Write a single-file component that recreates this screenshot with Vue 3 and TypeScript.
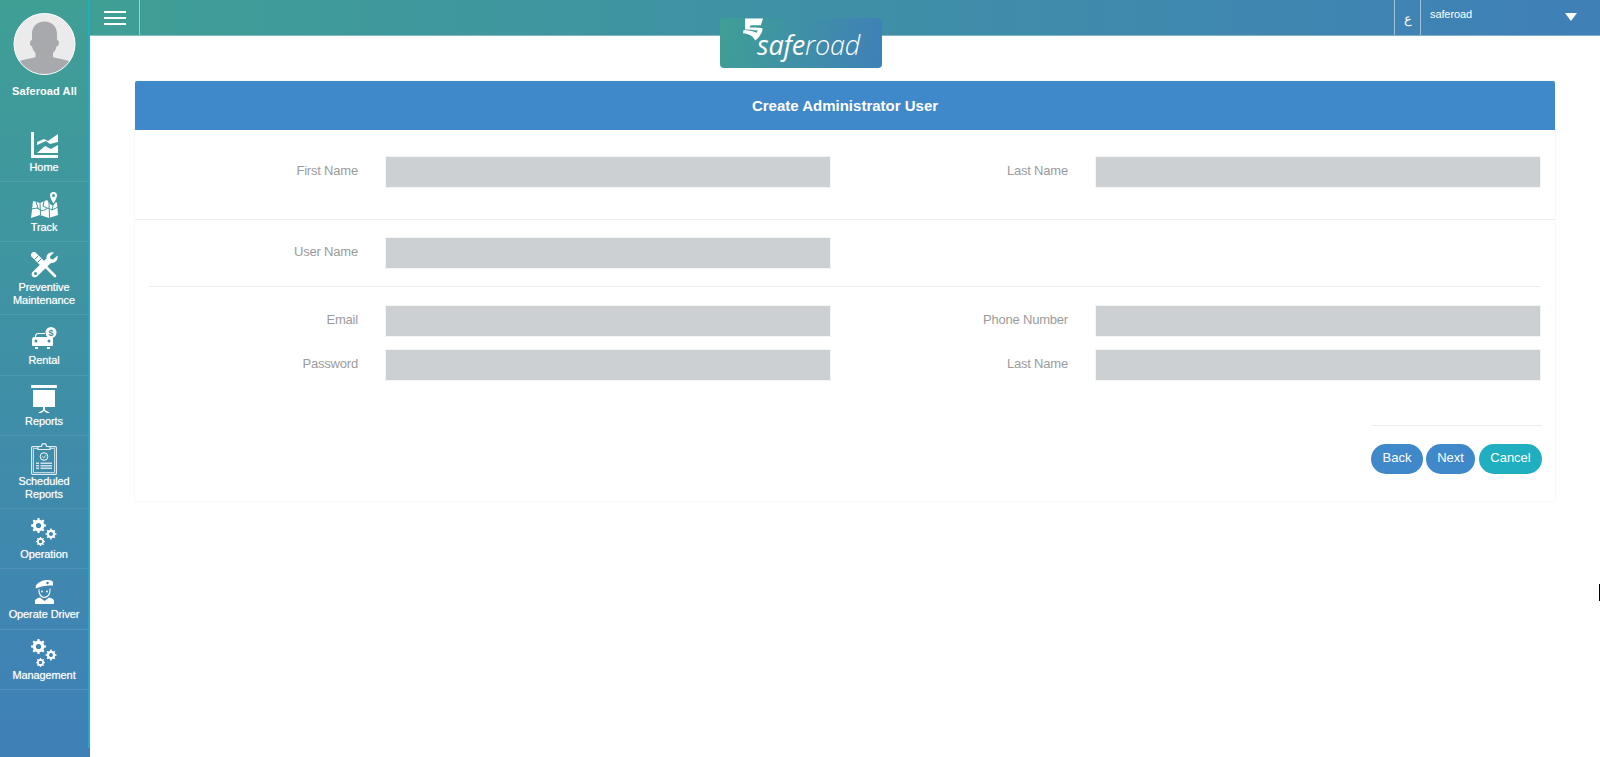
<template>
  <div class="page">
    <aside class="sidebar">
      <div class="sidebar-inner">
        <div class="profile">
          <div class="avatar">
            <svg viewBox="0 0 60 60" width="60" height="60">
              <path d="M30 7.500c7.500 0 12.500 5 12.500 12.500v6c1 0 2 1 2 3s-1 3-2.500 3.500c-.5 3-2 5-3.500 6.500v4c3 1.500 12 2 21 6v11H0V49c9-4 18-4.500 21-6v-4c-1.500-1.500-3-3.500-3.500-6.500C16 32 15.500 31 15.500 29s1-3 2-3v-6c0-7.500 5-12.500 12.500-12.500z" fill="#a7a9ac" />
            </svg>
          </div>
          <div class="profile-name">Saferoad All</div>
        </div>
        <nav>
          <a v-for="item in navItems" :key="item.label" class="nav-item" :class="{ roomy: item.roomy }">
            <span class="nav-icon">
              <svg v-if="item.icon === 'home'" width="27" height="26" viewBox="0 0 27 26" fill="#fff">
                <path d="M0 0h3v23h24v3H0z" />
                <path d="M6 10l7-3 4 2 10-7v8l-8 2-4-3-9 4z" />
                <path d="M6 21l8-7 6 3 7-4v8z" />
              </svg>
              <svg v-else-if="item.icon === 'track'" width="27" height="26" viewBox="0 0 27 26" fill="#fff">
                <path d="M22.500 0a3.500 3.500 0 0 1 3.500 3.500c0 2.500-3.500 8-3.500 8s-3.500-5.500-3.500-8A3.500 3.500 0 0 1 22.500 0zm0 2a1.500 1.500 0 1 0 0 3 1.500 1.500 0 0 0 0-3z" fill-rule="evenodd" />
                <path d="M2 9l7 2 7-3 3 4 3 2 3-4 1 1 1 12-9 3-9-3-9 3 1-8z" />
                <path d="M9 11l.5 12M18 8v3l.5 15M0 17l6-1 5 3 6-3 4 2 6-3M5 10l2 6 3 3M13 9l-1 5 4 2M22 14l-1 4" fill="none" stroke="#3f9a9b" stroke-width="1" />
              </svg>
              <svg v-else-if="item.icon === 'tools'" width="27" height="26" viewBox="0 0 27 26" fill="#fff">
                <path d="M3 3l8 8" stroke="#fff" stroke-width="6" stroke-linecap="round" />
                <path d="M11 11l13 13" stroke="#fff" stroke-width="2.600" stroke-linecap="round" />
                <path d="M3.500 7.500l4-4M6.500 10.500l4-4" stroke="#3f93a3" stroke-width="1" />
                <path d="M26.500 3.500c1 4.500-2.500 8-6.500 7.500L7 23.500c-1.500 2-4 2.500-5.500 1s-1-4 1-5.500L15.500 6.500C15 2.500 18.500-.5 23 .5l-4 4 .5 2.500 2.500.5z" />
                <circle cx="4.500" cy="21.500" r="1.500" fill="#3f93a3" />
              </svg>
              <svg v-else-if="item.icon === 'rental'" width="25" height="22" viewBox="0 0 25 22" fill="#fff">
                <circle cx="19" cy="5.500" r="5.500" />
                <text x="19" y="8.800" font-size="9" font-weight="700" text-anchor="middle" fill="#3f8fa5" font-family="Liberation Sans, sans-serif">$</text>
                <path d="M3 10c0-2.500 1-4 3-4h7v1H6C5 7 4 8 4 10z" />
                <path d="M0 12c0-1 1-2 2-2h17c1 0 2 1 2 2v6c0 1-1 1-2 1H2c-1 0-2 0-2-1zM3 20h3v2H3zM15 20h3v2h-3z" />
                <circle cx="4" cy="14" r="1.500" fill="#3f8fa5" />
                <circle cx="17" cy="14" r="1.500" fill="#3f8fa5" />
              </svg>
              <svg v-else-if="item.icon === 'board'" width="26" height="28" viewBox="0 0 26 28" fill="#fff">
                <path d="M0 0h26v3H0zM2 5h22v17H2zM12 22h2v3l5 3h-3l-3-2-3 2H7l5-3z" />
              </svg>
              <svg v-else-if="item.icon === 'clipboard'" width="26" height="32" viewBox="0 0 26 32">
                <rect x=".6" y="3.600" width="24.800" height="27.800" rx="1" fill="none" stroke="#dfeaf2" stroke-width="1.200" />
                <rect x="2.600" y="5.600" width="20.800" height="23.800" fill="none" stroke="#dfeaf2" stroke-width=".8" />
                <path d="M7 3.500h3.500C10.500 1.500 11.500.6 13 .6s2.500.9 2.500 2.900H19v3H7z" fill="#3f8aa8" stroke="#e8f0f5" stroke-width="1.100" />
                <circle cx="13" cy="13.500" r="3.800" fill="none" stroke="#fff" stroke-width="1" />
                <path d="M11.200 13.500l1.400 1.400 2.400-2.700" fill="none" stroke="#fff" stroke-width=".9" />
                <path d="M5 19.500h3v1.500H5zM5 22h3v1.500H5zM5 24.500h3V26H5zM9.500 19.500H21v1.500H9.500zM9.500 22H21v1.500H9.500zM9.500 24.500H21V26H9.500z" fill="#cfe0ea" />
              </svg>
              <svg v-else-if="item.icon === 'gears'" width="26" height="28" viewBox="0 0 26 28" fill="#fff" fill-rule="evenodd">
                <path :d="gearPath(7.500, 7.500, 7.500, 2.600, 8)" />
                <path :d="gearPath(20, 16, 5.500, 2, 8)" />
                <path :d="gearPath(9.500, 23.500, 4.500, 1.800, 8)" />
              </svg>
              <svg v-else width="19" height="24" viewBox="0 0 19 24" fill="#fff">
                <path d="M1 5.500C3 2 8 0 13 0c3 0 5 1 5 2.500v3C12 5 6 6 1 8.500c-.5-1-.5-2 0-3z" />
                <circle cx="12.500" cy="3" r="1.300" fill="#3f85b0" />
                <path d="M3.500 9.500c-.5 5 2.500 8.500 6 8.500s6.500-3.500 6-9.500l-1 .1c.5 5-2 8.200-5 8.200S4.200 13.500 4.500 9z" />
                <circle cx="7" cy="11.500" r=".9" />
                <circle cx="12" cy="11.500" r=".9" />
                <path d="M0 24v-3c0-1.500 1.500-2.500 5-3.500l4.500 3.500 4.500-3.500c3.500 1 5 2 5 3.500v3z" />
              </svg>
            </span>
            <span class="nav-label">
              <span v-for="line in item.label.split('|')" :key="line">{{ line }}</span>
            </span>
          </a>
        </nav>
      </div>
      <div class="sidebar-strip"></div>
    </aside>

    <div class="main">
      <header class="topbar">
        <button class="menu-btn" aria-label="Menu"><i></i><i></i><i></i></button>
        <div class="topbar-right">
          <span class="lang">ع</span>
          <div class="account">
            <span>saferoad</span>
            <b class="caret"></b>
          </div>
        </div>
      </header>

      <div class="logo">
        <svg class="logo-mark" width="20" height="23" viewBox="0 0 19 21" fill="#fff">
          <path d="M2 0h17l-2 6.500H7.500L6 8.500c5 0 11 0 12.500 1 .5 2.500-2.500 8.500-7 11.500-1.500-4-5.500-6.500-11.500-7l.5-3c4.500 0 8.500 1 12.500 2.500l1-2C10 11 5 10.500 2 10.500z" />
        </svg>
        <span class="logo-text">safe<em>road</em></span>
      </div>

      <section class="card">
        <h1 class="card-title">Create Administrator User</h1>

        <div class="form-row first">
          <div v-for="f in ['First Name', 'Last Name']" :key="f" class="field">
            <label>{{ f }}</label>
            <input type="text" />
          </div>
        </div>

        <div class="form-row second">
          <div class="field">
            <label>User Name</label>
            <input type="text" />
          </div>
        </div>

        <div class="form-rows third">
          <div class="form-row">
            <div class="field"><label>Email</label><input type="text" /></div>
            <div class="field"><label>Phone Number</label><input type="text" /></div>
          </div>
          <div class="form-row">
            <div class="field"><label>Password</label><input type="password" /></div>
            <div class="field"><label>Last Name</label><input type="password" /></div>
          </div>
        </div>

        <div class="actions">
          <button class="btn">Back</button>
          <button class="btn next">Next</button>
          <button class="btn cancel">Cancel</button>
        </div>
      </section>
      <span class="text-cursor"></span>
    </div>
  </div>
</template>

<script setup lang="ts">
interface NavItem {
  label: string;
  icon: string;
  roomy?: boolean;
}

// a | in the label is a line break
const navItems: NavItem[] = [
  { label: "Home", icon: "home" },
  { label: "Track", icon: "track" },
  { label: "Preventive|Maintenance", icon: "tools" },
  { label: "Rental", icon: "rental", roomy: true },
  { label: "Reports", icon: "board" },
  { label: "Scheduled|Reports", icon: "clipboard" },
  { label: "Operation", icon: "gears" },
  { label: "Operate Driver", icon: "driver", roomy: true },
  { label: "Management", icon: "gears" },
];

function gearPath(cx: number, cy: number, r: number, hole: number, teeth: number): string {
  const inner = r * 0.78;
  const pts: string[] = [];
  const step = (Math.PI * 2) / teeth;
  for (let i = 0; i < teeth; i++) {
    const a = i * step;
    const w = step * 0.2;
    const corners: [number, number][] = [
      [inner, a - w * 1.3],
      [r, a - w * 0.8],
      [r, a + w * 0.8],
      [inner, a + w * 1.3],
    ];
    for (const [rad, ang] of corners) {
      pts.push(`${(cx + rad * Math.cos(ang)).toFixed(2)} ${(cy + rad * Math.sin(ang)).toFixed(2)}`);
    }
  }
  const circle = `M${cx - hole} ${cy}a${hole} ${hole} 0 1 0 ${hole * 2} 0a${hole} ${hole} 0 1 0 ${-hole * 2} 0z`;
  return `M${pts.join("L")}z${circle}`;
}
</script>

<style>
html,
body {
  margin: 0;
  padding: 0;
  background: #fff;
}
</style>

<style scoped>
.page {
  display: flex;
  height: 757px;
  overflow: hidden;
  font-family: "Liberation Sans", Arial, sans-serif;
}

.sidebar {
  display: flex;
  flex: 0 0 90px;
  background: linear-gradient(180deg, #3f9f95 0%, #3f80b8 100%);
}
.sidebar-inner {
  width: 88px;
}
.sidebar-strip {
  width: 2px;
  height: 748px;
  background: #20afc0;
}
.profile {
  height: 122px;
  padding-top: 13px;
  box-sizing: border-box;
  text-align: center;
}
.avatar {
  width: 60px;
  height: 60px;
  margin: 0 auto;
  border: 1.500px solid #fff;
  border-radius: 50%;
  background: #ebebeb;
  overflow: hidden;
  transform: translateX(.5px);
}
.avatar svg {
  display: block;
}
.profile-name {
  margin-top: 10px;
  padding-left: 1px;
  color: #fff;
  font-size: 11px;
  font-weight: 700;
  line-height: 13px;
  letter-spacing: .1px;
}
.nav-item {
  display: block;
  padding: 7px 0;
  border-bottom: 1px solid rgba(255, 255, 255, 0.09);
  color: #fff;
  text-align: center;
}
.nav-item.roomy {
  padding-bottom: 8px;
}
.nav-icon {
  display: flex;
  height: 32px;
  align-items: center;
  justify-content: center;
}
.nav-label {
  display: block;
  font-size: 11px;
  line-height: 13px;
  letter-spacing: -.1px;
  text-shadow: 0 0 1px rgba(255, 255, 255, 0.6);
}
.nav-label span {
  display: block;
}

.main {
  position: relative;
  flex: 1;
  min-width: 0;
}
.topbar {
  display: flex;
  justify-content: space-between;
  height: 35px;
  border-bottom: 1px solid rgba(255, 255, 255, 0.35);
  background: linear-gradient(90deg, #3f9f95 0%, #3f80b8 100%);
  box-sizing: content-box;
}
.menu-btn {
  display: flex;
  flex-direction: column;
  justify-content: center;
  gap: 4px;
  width: 50px;
  height: 35px;
  padding: 0 13px 0 14px;
  border: 0;
  border-right: 1px solid rgba(255, 255, 255, 0.5);
  background: none;
}
.menu-btn i {
  display: block;
  height: 2px;
  background: #fff;
}
.topbar-right {
  display: flex;
}
.lang {
  width: 25px;
  border-left: 1px solid rgba(255, 255, 255, 0.5);
  border-right: 1px solid rgba(255, 255, 255, 0.5);
  color: #fff;
  font-size: 13px;
  line-height: 38px;
  text-align: center;
}
.account {
  display: flex;
  justify-content: space-between;
  width: 179px;
  padding: 8px 23px 0 9px;
  box-sizing: border-box;
  color: #fff;
  font-size: 11px;
  line-height: 13px;
  letter-spacing: -.1px;
}
.caret {
  width: 0;
  height: 0;
  margin-top: 5px;
  border-left: 6px solid transparent;
  border-right: 6px solid transparent;
  border-top: 8px solid #fff;
}

.logo {
  position: absolute;
  top: 18px;
  left: 630px;
  width: 162px;
  height: 50px;
  border-radius: 4px;
  background: linear-gradient(100deg, #3f9f95 0%, #3f80b8 100%);
}
.logo-mark {
  position: absolute;
  left: 23px;
  top: 0;
}
.logo-text {
  position: absolute;
  left: 37px;
  top: 8px;
  color: #fff;
  font-family: "Open Sans", sans-serif;
  font-size: 27px;
  font-style: italic;
  line-height: 38px;
  letter-spacing: -.2px;
  white-space: nowrap;
}
.logo-text em {
  font-weight: 300;
}

.card {
  margin: 45px 45px 0;
  padding-bottom: 27px;
  border-radius: 2px 2px 0 0;
  box-shadow: 0 0 2px rgba(0, 0, 0, 0.1);
}
.card-title {
  margin: 0;
  height: 49px;
  border-radius: 2px 2px 0 0;
  background: #3f88ca;
  color: #fff;
  font-size: 15px;
  font-weight: 700;
  line-height: 49px;
  text-align: center;
}
.form-row {
  display: grid;
  grid-template-columns: 710px 710px;
}
.form-row.first {
  padding: 26px 0 31px;
  border-bottom: 1px solid #eee;
}
.form-row.second {
  margin: 0 14px;
  padding: 17px 0;
  border-bottom: 1px solid #eee;
  grid-template-columns: 696px;
}
.form-row.second .field {
  grid-template-columns: 209px 446px;
}
.form-rows {
  display: flex;
  flex-direction: column;
  gap: 12px;
  padding-top: 18px;
}
.field {
  display: grid;
  grid-template-columns: 223px 446px;
  gap: 27px;
  align-items: center;
}
.field label {
  color: #9b9b9b;
  font-size: 13px;
  line-height: 16px;
  letter-spacing: -.2px;
  text-align: right;
  position: relative;
  top: -1px;
}
.field input {
  display: block;
  width: 446px;
  height: 32px;
  margin: 0;
  padding: 0;
  border: 1px solid #f4f5f5;
  box-sizing: border-box;
  background: #cdd0d3;
  outline: none;
}
.actions {
  display: flex;
  justify-content: flex-end;
  gap: 3px;
  width: 171px;
  margin: 44px 13px 0 auto;
  padding-top: 18px;
  border-top: 1px solid #eee;
}
.btn {
  width: 52px;
  height: 30px;
  padding: 0 0 4px;
  border: 0;
  border-radius: 15px;
  background: #3f88ca;
  color: #fff;
  font-family: inherit;
  font-size: 13px;
}
.btn.next {
  width: 49px;
}
.btn.cancel {
  width: 63px;
  margin-left: 1px;
  background: #20afc0;
}
.text-cursor {
  position: absolute;
  right: 0;
  top: 584px;
  width: 1px;
  height: 17px;
  background: #000;
}
</style>
